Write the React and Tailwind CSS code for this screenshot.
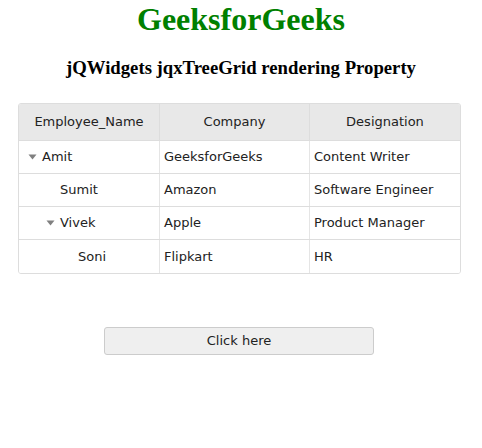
import React from 'react';

const rows = [
  { name: 'Amit', arrow: true, pad: 'pl-[9px]', company: 'GeeksforGeeks', designation: 'Content Writer' },
  { name: 'Sumit', arrow: false, pad: 'pl-[41px]', company: 'Amazon', designation: 'Software Engineer' },
  { name: 'Vivek', arrow: true, pad: 'pl-[27px]', company: 'Apple', designation: 'Product Manager' },
  { name: 'Soni', arrow: false, pad: 'pl-[59px]', company: 'Flipkart', designation: 'HR' },
];

const Arrow = () => (
  <svg width="9" height="6" viewBox="0 0 9 6" className="mr-[5px] shrink-0">
    <path d="M0.5 0.5 L8.5 0.5 L4.5 5.5 Z" fill="#808080" />
  </svg>
);

const App = () => {
  return (
    <div className="w-[482px] h-[448px] bg-white font-['Liberation_Serif',serif] text-black">
      <h1 className="pt-[1px] text-center text-[32px] leading-[36px] font-bold text-[#008000]">GeeksforGeeks</h1>
      <h3 className="mt-[19px] text-center text-[18.72px] leading-[24px] font-bold">
        jQWidgets jqxTreeGrid rendering Property
      </h3>

      <div className="ml-[18px] mt-[23px] w-[443px] rounded-[3px] border border-[#dddddd] overflow-hidden font-['DejaVu_Sans',Verdana,sans-serif] text-[13px] text-[#222]">
        <div className="flex h-[37px] bg-[#e8e8e8] border-b border-[#dddddd]">
          <div className="w-[141px] flex items-center justify-center border-r border-[#dddddd]">Employee_Name</div>
          <div className="w-[150px] flex items-center justify-center border-r border-[#dddddd]">Company</div>
          <div className="flex-1 flex items-center justify-center">Designation</div>
        </div>
        {rows.map((r, i) => (
          <div
            key={r.name}
            className={`flex h-[33px] bg-white ${i < rows.length - 1 ? 'border-b border-[#dddddd]' : ''}`}
          >
            <div className={`w-[141px] flex items-center border-r border-[#e5e5e5] ${r.pad}`}>
              {r.arrow && <Arrow />}
              <span>{r.name}</span>
            </div>
            <div className="w-[150px] flex items-center pl-[4px] border-r border-[#e5e5e5]">{r.company}</div>
            <div className="flex-1 flex items-center pl-[4px]">{r.designation}</div>
          </div>
        ))}
      </div>

      <div className="mt-[53px] flex">
        <button className="ml-[104px] w-[270px] h-[28px] rounded-[3px] border border-[#cccccc] bg-[#efefef] font-['DejaVu_Sans',Verdana,sans-serif] text-[13px] text-[#222]">
          Click here
        </button>
      </div>
    </div>
  );
};

export default App;
